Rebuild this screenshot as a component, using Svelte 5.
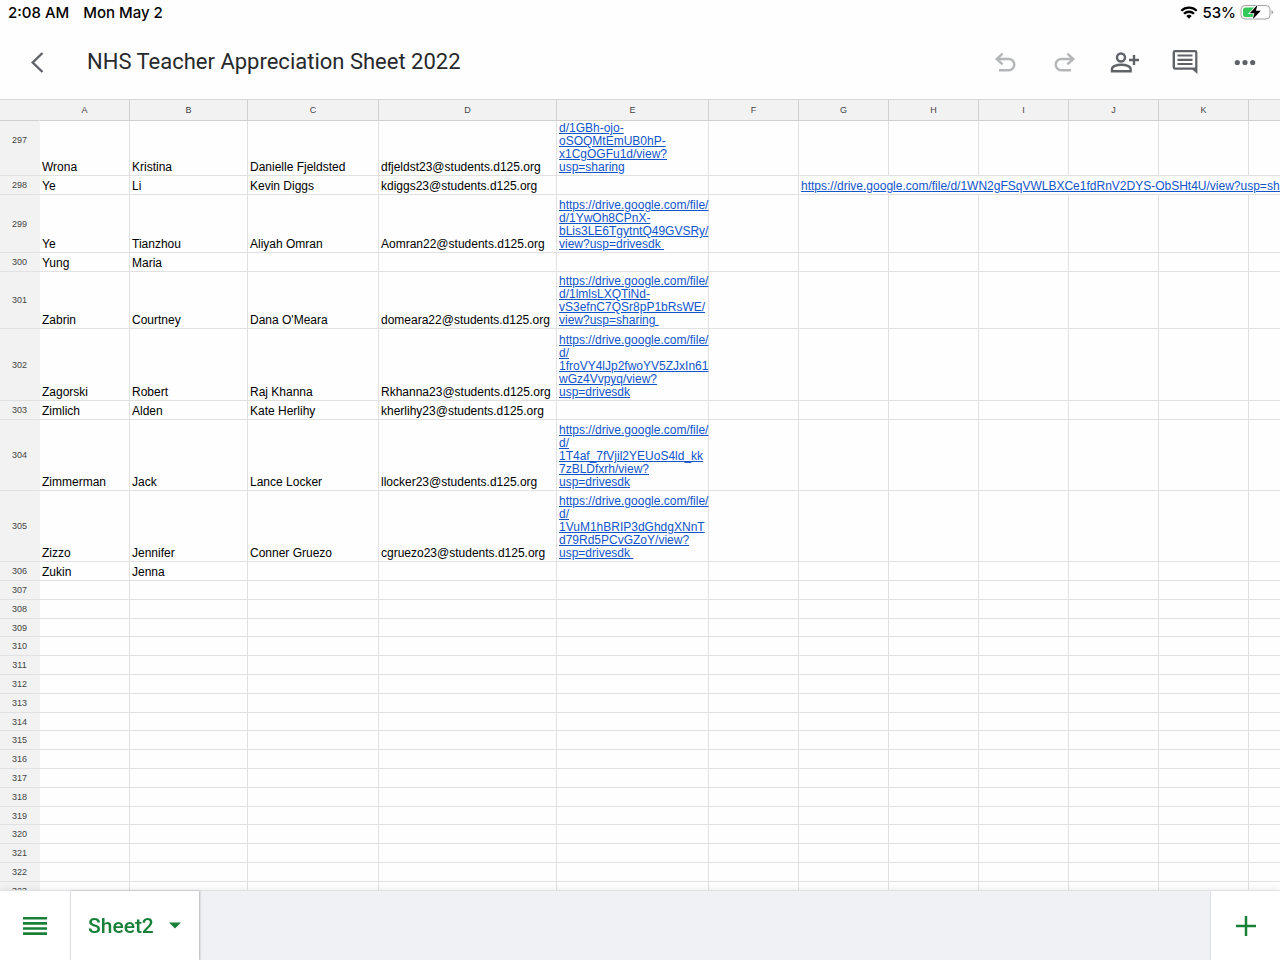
<script>
	import { onMount } from 'svelte';

	const FIRST_ROW = 297;
	const LAST_ROW = 323;
	// default row is 21px, shown at the current sheet scale
	const DEFAULT_HEIGHT = 18.8;

	const columns = [
		{ name: 'A', width: 90 },
		{ name: 'B', width: 118 },
		{ name: 'C', width: 131 },
		{ name: 'D', width: 178 },
		{ name: 'E', width: 152 },
		{ name: 'F', width: 90 },
		{ name: 'G', width: 90 },
		{ name: 'H', width: 90 },
		{ name: 'I', width: 90 },
		{ name: 'J', width: 90 },
		{ name: 'K', width: 90 }
	];

	const data = [
		{
			height: 72,
			cells: ['Wrona', 'Kristina', 'Danielle Fjeldsted', 'dfjeldst23@students.d125.org'],
			link: ['d/1GBh-ojo-', 'oSOQMtEmUB0hP-', 'x1CgOGFu1d/view?', 'usp=sharing']
		},
		{
			height: 19,
			cells: ['Ye', 'Li', 'Kevin Diggs', 'kdiggs23@students.d125.org'],
			wide: 'https://drive.google.com/file/d/1WN2gFSqVWLBXCe1fdRnV2DYS-ObSHt4U/view?usp=sharing'
		},
		{
			height: 58,
			cells: ['Ye', 'Tianzhou', 'Aliyah Omran', 'Aomran22@students.d125.org'],
			link: ['https://drive.google.com/file/', 'd/1YwOh8CPnX-', 'bLis3LE6TgytntQ49GVSRy/', 'view?usp=drivesdk ']
		},
		{ height: 19, cells: ['Yung', 'Maria', '', ''] },
		{
			height: 57,
			cells: ['Zabrin', 'Courtney', "Dana O'Meara", 'domeara22@students.d125.org'],
			link: ['https://drive.google.com/file/', 'd/1lmlsLXQTiNd-', 'vS3efnC7QSr8pP1bRsWE/', 'view?usp=sharing ']
		},
		{
			height: 72,
			cells: ['Zagorski', 'Robert', 'Raj Khanna', 'Rkhanna23@students.d125.org'],
			link: ['https://drive.google.com/file/', 'd/', '1froVY4lJp2fwoYV5ZJxIn61', 'wGz4Vvpyq/view?', 'usp=drivesdk']
		},
		{ height: 19, cells: ['Zimlich', 'Alden', 'Kate Herlihy', 'kherlihy23@students.d125.org'] },
		{
			height: 71,
			cells: ['Zimmerman', 'Jack', 'Lance Locker', 'llocker23@students.d125.org'],
			link: ['https://drive.google.com/file/', 'd/', '1T4af_7fVjil2YEUoS4ld_kk', '7zBLDfxrh/view?', 'usp=drivesdk']
		},
		{
			height: 71,
			cells: ['Zizzo', 'Jennifer', 'Conner Gruezo', 'cgruezo23@students.d125.org'],
			link: ['https://drive.google.com/file/', 'd/', '1VuM1hBRIP3dGhdgXNnT', 'd79Rd5PCvGZoY/view?', 'usp=drivesdk ']
		},
		{ height: 19, cells: ['Zukin', 'Jenna', '', ''] }
	];

	const rows = [...data];
	for (let i = 0; FIRST_ROW + rows.length <= LAST_ROW; i++) {
		const height = Math.round((i + 1) * DEFAULT_HEIGHT) - Math.round(i * DEFAULT_HEIGHT);
		rows.push({ height, cells: ['', '', '', ''] });
	}

	let grid;

	onMount(() => {
		grid.scrollTop = 17;
	});
</script>

<div class="app">
	<div class="status">
		<span>2:08 AM</span>
		<span>Mon May 2</span>
		<div class="device">
			<svg width="18" height="13" viewBox="0 0 18 13" aria-hidden="true">
				<g fill="none" stroke="#000" stroke-width="2.3">
					<path d="M1.3 4.7a11 11 0 0 1 15.4 0" />
					<path d="M4 7.8a7.1 7.1 0 0 1 10 0" />
				</g>
				<path d="M9 12.7L6.3 10a3.9 3.9 0 0 1 5.4 0z" />
			</svg>
			<span>53%</span>
			<svg width="34" height="16" viewBox="0 0 34 16" aria-hidden="true">
				<rect x="1" y="1.5" width="29" height="13.5" rx="4" fill="none" stroke="#a3a3a3" />
				<path d="M31.5 6v4.5q1.7-.8 1.7-2.25T31.5 6z" fill="#a3a3a3" />
				<path d="M5.500 3.500H16v9.500H5.500a2.500 2.500 0 0 1-2.500-2.500V6a2.500 2.500 0 0 1 2.500-2.500z" fill="#34c759" />
				<path d="M17.500.8L9.800 9.200h4.600l-1.600 6 8-8.400h-4.900z" stroke="#fff" stroke-width="1.600" paint-order="stroke" />
			</svg>
		</div>
	</div>

	<header class="toolbar">
		<button class="icon back" aria-label="Back">
			<svg width="24" height="24" viewBox="0 0 24 24">
				<path d="M17.5 3L7.7 12.500l9.800 9.500" fill="none" stroke="currentColor" stroke-width="2.400" />
			</svg>
		</button>
		<h1>NHS Teacher Appreciation Sheet 2022</h1>
		<button class="icon faded" aria-label="Undo">
			<svg width="24" height="24" viewBox="0 0 24 24">
				<path
					d="M9.6 3.6L3.7 9l5.900 5.400M3.700 9h12a5.600 5.600 0 0 1 0 11.200H6"
					fill="none"
					stroke="currentColor"
					stroke-width="2.400"
				/>
			</svg>
		</button>
		<button class="icon faded" aria-label="Redo">
			<svg width="24" height="24" viewBox="0 0 24 24">
				<path
					d="M14.400 3.600L20.300 9l-5.900 5.400M20.300 9h-12a5.600 5.600 0 0 0 0 11.200H18"
					fill="none"
					stroke="currentColor"
					stroke-width="2.400"
				/>
			</svg>
		</button>
		<button class="icon" aria-label="Share">
			<svg width="30" height="24" viewBox="0 0 30 24">
				<g fill="none" stroke="currentColor" stroke-width="2.400">
					<circle cx="11" cy="7.500" r="4" />
					<path d="M2 21.300v-2.200c0-2.800 4.600-4.300 9.300-4.300s9.300 1.500 9.300 4.300v2.200z" />
					<path d="M24 5v10M19 10h10" />
				</g>
			</svg>
		</button>
		<button class="icon" aria-label="Comments">
			<svg width="26" height="26" viewBox="0 0 26 26">
				<path
					fill-rule="evenodd"
					d="M3 1h20a2.400 2.400 0 0 1 2.400 2.400V25l-4.800-4.300H3A2.400 2.400 0 0 1 .6 18.300V3.400A2.400 2.400 0 0 1 3 1zm0 2.200v15.300h20.200V3.200z"
					fill="currentColor"
				/>
				<path d="M5.500 6.500h15M5.500 10.800h15M5.500 15h15" stroke="currentColor" stroke-width="2.200" />
			</svg>
		</button>
		<button class="icon" aria-label="More">
			<svg width="24" height="24" viewBox="0 0 24 24" fill="currentColor">
				<circle cx="4.300" cy="12.500" r="2.600" />
				<circle cx="12" cy="12.500" r="2.600" />
				<circle cx="19.700" cy="12.500" r="2.600" />
			</svg>
		</button>
	</header>

	<main class="grid" bind:this={grid}>
		<table>
			<colgroup>
				<col class="gutter" />
				{#each columns as column}
					<col style="width: {column.width}px" />
				{/each}
				<col />
			</colgroup>
			<thead>
				<tr>
					<td class="corner"></td>
					{#each columns as column}
						<th scope="col">{column.name}</th>
					{/each}
					<td></td>
				</tr>
			</thead>
			<tbody>
				{#each rows as row, i}
					<tr style="height: {row.height}px">
						<th scope="row">{FIRST_ROW + i}</th>
						{#each row.cells as cell}
							<td>{cell}</td>
						{/each}
						<td>
							{#if row.link}
								<a href={row.link.join('').trim()}>{row.link.join('\n')}</a>
							{/if}
						</td>
						<td></td>
						{#if row.wide}
							<td colspan="6"><a href={row.wide}>{row.wide}</a></td>
						{:else}
							{#each { length: 6 } as _}
								<td></td>
							{/each}
						{/if}
					</tr>
				{/each}
			</tbody>
		</table>
	</main>

	<footer class="tabs">
		<button class="all" aria-label="All sheets">
			<svg width="24" height="18" viewBox="0 0 24 18">
				<path d="M0 1.300h24M0 6.400h24M0 11.500h24M0 16.600h24" stroke="currentColor" stroke-width="2.600" />
			</svg>
		</button>
		<button class="tab">
			Sheet2
			<svg width="12" height="7" viewBox="0 0 12 7"><path d="M0 .5h12l-6 6z" fill="currentColor" /></svg>
		</button>
		<button class="add" aria-label="Add sheet">
			<svg width="20" height="20" viewBox="0 0 20 20">
				<path d="M10 0v20M0 10h20" stroke="currentColor" stroke-width="2.500" />
			</svg>
		</button>
	</footer>
</div>

<style>
	:global(body) {
		margin: 0;
	}

	.app {
		display: flex;
		flex-direction: column;
		height: 100vh;
		background: #fefefe;
		color: #000;
		font-family: 'Liberation Sans', Arial, sans-serif;
	}

	button {
		display: flex;
		align-items: center;
		justify-content: center;
		padding: 0;
		border: 0;
		background: none;
		color: #5f6368;
		font: inherit;
	}

	.status {
		display: flex;
		align-items: center;
		gap: 14px;
		height: 24px;
		padding: 0 6px 0 8px;
		font-family: Inter, sans-serif;
		font-size: 15px;
		font-weight: 500;
	}

	.device {
		display: flex;
		align-items: center;
		gap: 4px;
		margin-left: auto;
	}

	.toolbar {
		display: flex;
		align-items: center;
		height: 75px;
		padding-right: 5px;
	}

	.icon {
		flex: none;
		width: 60px;
		height: 60px;
	}

	.faded {
		color: #b4b6b8;
	}

	.back {
		width: 74px;
	}

	h1 {
		flex: 1;
		margin: 0 0 0 13px;
		font-family: Roboto, sans-serif;
		font-size: 22px;
		font-weight: 400;
		line-height: 28px;
		color: #27292c;
		white-space: nowrap;
	}

	.grid {
		flex: 1;
		min-height: 0;
		overflow-x: hidden;
		overflow-y: auto;
		scrollbar-width: none;
		border-top: 1px solid #d5d6d9;
	}

	table {
		width: 100%;
		min-width: 1250px;
		table-layout: fixed;
		border-collapse: separate;
		border-spacing: 0;
	}

	.gutter {
		width: 40px;
	}

	td,
	th {
		box-sizing: border-box;
		padding: 0;
		border-right: 1px solid #e1e1e1;
		border-bottom: 1px solid #e1e1e1;
	}

	td:last-child {
		border-right: 0;
	}

	th,
	thead td {
		background: #f2f2f2;
		color: #444;
		font-size: 9px;
		font-weight: 400;
		line-height: 12px;
		text-align: center;
	}

	thead tr {
		height: 21px;
	}

	thead th,
	thead td {
		position: sticky;
		top: 0;
		border-color: #d0d0d0;
	}

	.corner,
	tbody th {
		border-right-color: #f2f2f2;
	}

	tbody td {
		padding: 0 0 1px 2px;
		font-size: 12px;
		line-height: 13px;
		vertical-align: bottom;
		white-space: pre;
	}

	a {
		color: #1155cc;
	}

	.tabs {
		display: flex;
		height: 69px;
		border-top: 1px solid #dfe0e3;
		background: #eff1f4;
		box-shadow: 0 -2px 6px rgba(0, 0, 0, 0.06);
		z-index: 1;
	}

	.tabs button {
		background: #fff;
		color: #188038;
	}

	.all {
		width: 70px;
	}

	.tabs .tab {
		gap: 15px;
		padding: 0 18px 0 17px;
		border-left: 1px solid #dfe0e3;
		box-shadow: 1px 0 2px rgba(0, 0, 0, 0.25);
		font-family: Roboto, sans-serif;
		font-size: 21px;
		font-weight: 500;
	}

	.tabs .add {
		width: 70px;
		margin-left: auto;
		border-left: 1px solid #dfe0e3;
	}
</style>
